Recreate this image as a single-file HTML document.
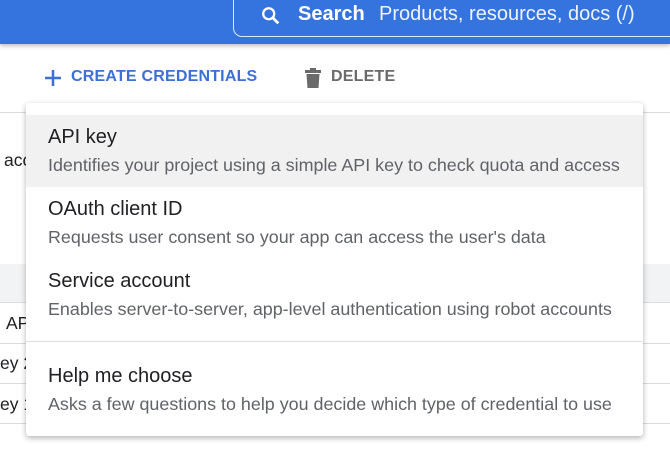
<!DOCTYPE html>
<html><head><style>
body{margin:0;width:670px;height:462px;overflow:hidden;background:#fff;font-family:"Liberation Sans",Arial,sans-serif;position:relative}
.hdr{position:absolute;left:0;top:0;width:670px;height:44px;background:#3574df;box-shadow:0 2px 4px rgba(0,0,0,.25)}
.search{position:absolute;left:233px;top:-10px;width:500px;height:45px;border:1.5px solid #dfe8fb;border-radius:9px;color:#fff;font-size:20px}
.search .s{position:absolute;left:64px;top:12px;font-weight:bold}
.search .p{position:absolute;left:145px;top:12px;color:#eef3fd}
.tb{position:absolute;top:68px;font-size:16px;font-weight:bold;letter-spacing:.2px}
.line{position:absolute;left:0;width:670px;height:1px;background:#dadce0}
.menu{position:absolute;left:26px;top:103px;width:617px;height:333px;background:#fff;box-shadow:0 2px 6px rgba(0,0,0,.3);border-radius:3px}
.it{position:absolute;left:0;width:617px;height:72px}
.it .t{position:absolute;left:22px;top:11px;font-size:20px;color:#202124}
.it .d{position:absolute;left:22px;top:40px;font-size:17.9px;color:#5f6368}
.lt{position:absolute;font-size:17.5px;color:#202124}
</style></head><body>
<div class="line" style="top:112px"></div>
<div style="position:absolute;left:0;top:264px;width:670px;height:38px;background:#f1f3f4"></div>
<div class="line" style="top:302px"></div>
<div class="line" style="top:343px"></div>
<div class="line" style="top:383px"></div>
<div class="line" style="top:423px"></div>
<div class="lt" style="left:4px;top:150px">acc</div>
<div class="lt" style="left:6px;top:313px">API</div>
<div class="lt" style="left:0;top:353px">ey 2</div>
<div class="lt" style="left:0;top:394px">ey 1</div>
<div class="hdr"><div class="search">
<svg style="position:absolute;left:26px;top:14px" width="22" height="22" viewBox="0 0 24 24"><circle cx="9.5" cy="9.5" r="6" fill="none" stroke="#fff" stroke-width="2.5"/><path d="M14 14l6 6" stroke="#fff" stroke-width="3"/></svg>
<span class="s">Search</span><span class="p">Products, resources, docs (/)</span></div></div>
<svg style="position:absolute;left:44px;top:69px" width="18" height="18" viewBox="0 0 18 18"><path d="M9 1v16M1 9h16" stroke="#3c6fd8" stroke-width="2.5"/></svg>
<div class="tb" style="left:71px;color:#3c6fd8">CREATE CREDENTIALS</div>
<svg style="position:absolute;left:304px;top:68px" width="18" height="21" viewBox="0 0 18 21"><rect x="1" y="2" width="16" height="3" fill="#6a6a6a"/><rect x="6" y="0" width="6" height="3" fill="#6a6a6a"/><path d="M2.5 6h13l-1 14h-11z" fill="#6a6a6a"/></svg>
<div class="tb" style="left:331px;color:#6a6a6a">DELETE</div>
<div class="menu">
<div class="it" style="top:12px;background:#f1f1f1"><div class="t">API key</div><div class="d">Identifies your project using a simple API key to check quota and access</div></div>
<div class="it" style="top:84px"><div class="t">OAuth client ID</div><div class="d">Requests user consent so your app can access the user's data</div></div>
<div class="it" style="top:156px"><div class="t">Service account</div><div class="d">Enables server-to-server, app-level authentication using robot accounts</div></div>
<div style="position:absolute;left:0;top:238px;width:617px;height:1px;background:#dadce0"></div>
<div class="it" style="top:251px"><div class="t">Help me choose</div><div class="d">Asks a few questions to help you decide which type of credential to use</div></div>
</div>
</body></html>
